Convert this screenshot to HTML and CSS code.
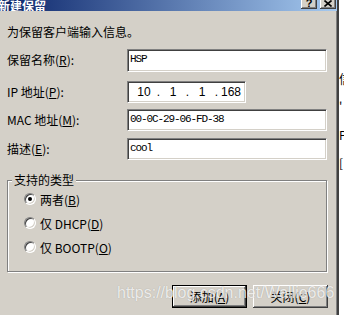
FILE: index.html
```html
<!DOCTYPE html>
<html lang="zh-CN">
<head>
  <meta charset="UTF-8">
  <title>新建保留</title>
  <link rel="stylesheet" href="styles.css">
</head>
<body>

<div class="screen">
  <div class="dialog">
    <div class="titlebar">
      <span class="title">新建保留</span>
      <span class="tbtn">?</span>
      <span class="tbtn">
        <svg width="8" height="7" viewBox="0 0 8 7"><path d="M0.5 0.5 L7.5 6.5 M7.5 0.5 L0.5 6.5" stroke="#000" stroke-width="1.6" fill="none"/></svg>
      </span>
    </div>

    <div class="content">
      <p class="intro">为保留客户端输入信息。</p>

      <div class="form">
        <label class="lbl">保留名称(<u>R</u>):</label>
        <div class="field tall">HSP</div>

        <label class="lbl">IP 地址(<u>P</u>):</label>
        <div class="field ip">
          <span class="oct">10</span><span class="dot">.</span>
          <span class="oct">1</span><span class="dot">.</span>
          <span class="oct">1</span><span class="dot">.</span>
          <span class="oct">168</span>
        </div>

        <label class="lbl">MAC 地址(<u>M</u>):</label>
        <div class="field">00-0C-29-06-FD-38</div>

        <label class="lbl">描述(<u>E</u>):</label>
        <div class="field">cool</div>
      </div>

      <fieldset class="group">
        <legend>支持的类型</legend>
        <div class="radios">
          <label class="radio"><span class="circle checked"></span><span>两者(<u>B</u>)</span></label>
          <label class="radio"><span class="circle"></span><span>仅 DHCP(<u>D</u>)</span></label>
          <label class="radio"><span class="circle"></span><span>仅 BOOTP(<u>O</u>)</span></label>
        </div>
      </fieldset>

      <div class="buttons">
        <button class="btn default">添加(<u>A</u>)</button>
        <button class="btn">关闭(<u>C</u>)</button>
      </div>
    </div>

    <div class="watermark">https://blog.csdn.net/Wallie666</div>
  </div>

  <div class="behind">
    <span>信</span>
    <span>'</span>
    <span>P</span>
    <span>[</span>
  </div>
</div>

</body>
</html>
```

FILE: styles.css
```css
body {
  margin: 0;
  background-color: #fff;
  font-family: "Noto Sans CJK SC", sans-serif;
  font-size: 12px;
  color: #000;
  overflow: hidden;
}

.screen {
  display: flex;
  height: 315px;
}

.dialog {
  position: relative;
  width: 337px;
  flex: none;
  background-color: #d4d0c8;
  border-right: 2px solid #404040;
  box-shadow: inset -1px 0 0 #808080;
}

/* title bar, top half is off screen */
.titlebar {
  display: flex;
  align-items: flex-end;
  gap: 3px;
  height: 11px;
  padding-right: 1px;
  overflow: hidden;
  background: linear-gradient(to right, #0a246a, #a6caf0);
}

.title {
  flex: 1;
  margin: 0 0 -2px -2px;
  color: #fff;
  font-weight: bold;
  font-size: 12px;
  line-height: 14px;
  white-space: nowrap;
}

.tbtn {
  display: flex;
  align-items: center;
  justify-content: center;
  width: 16px;
  height: 14px;
  margin-bottom: 2px;
  box-sizing: border-box;
  padding-top: 2px;
  background-color: #d4d0c8;
  font-family: "Liberation Sans", sans-serif;
  font-weight: bold;
  font-size: 11px;
  box-shadow: inset -1px -1px #404040, inset 1px 1px #fff, inset -2px -2px #808080;
}

.content {
  padding: 13px 10px 0 7px;
}

.intro {
  margin: 0 0 9px;
  line-height: 16px;
}

.form {
  display: grid;
  grid-template-columns: 120px 200px;
  grid-template-rows: 32px 28px 29px 22px;
}

.lbl {
  line-height: 22px;
}

.field {
  height: 22px;
  box-sizing: border-box;
  padding: 0 2px;
  background-color: #fff;
  border: 1px solid;
  border-color: #808080 #fff #fff #808080;
  box-shadow: inset 1px 1px #404040, inset -1px -1px #d4d0c8;
  font-family: "Liberation Mono", monospace;
  font-size: 11px;
  letter-spacing: -1.1px;
  line-height: 19px;
}

.field.tall {
  height: 23px;
}

.field.ip {
  display: flex;
  align-items: center;
  width: 119px;
  padding-left: 5px;
  font-family: "Liberation Sans", sans-serif;
  font-size: 12px;
  letter-spacing: 0;
}

.oct {
  width: 22px;
  text-align: center;
}

.dot {
  width: 7px;
  text-align: center;
}

.group {
  width: 320px;
  box-sizing: border-box;
  margin: 13px 0 0;
  padding: 0;
  border: 1px solid #808080;
  box-shadow: 1px 1px 0 #fff, inset 1px 1px 0 #fff;
}

.group legend {
  position: relative;
  margin-left: 4px;
  padding: 0 2px;
  line-height: 14px;
  background-color: #d4d0c8;
}

.radios {
  padding: 0 0 12px 16px;
}

.radio {
  display: flex;
  align-items: center;
  gap: 4px;
  height: 24px;
}

.circle {
  position: relative;
  width: 12px;
  height: 12px;
  box-sizing: border-box;
  border-radius: 50%;
  background-color: #fff;
  border: 1px solid;
  border-color: #808080 #fff #fff #808080;
  box-shadow: inset 1px 1px #404040, inset -1px -1px #d4d0c8;
}

.circle.checked::after {
  content: "";
  position: absolute;
  left: 3px;
  top: 3px;
  width: 4px;
  height: 4px;
  border-radius: 50%;
  background-color: #000;
}

.buttons {
  display: flex;
  justify-content: flex-end;
  gap: 6px;
  margin: 13px -1px 0 0;
}

.btn {
  width: 75px;
  height: 23px;
  box-sizing: border-box;
  padding: 0;
  border: none;
  background-color: #d4d0c8;
  font-family: "Noto Sans CJK SC", sans-serif;
  font-size: 12px;
  color: #000;
  box-shadow: inset -1px -1px #404040, inset 1px 1px #fff, inset -2px -2px #808080;
}

.btn.default {
  border: 1px solid #000;
}

.watermark {
  position: absolute;
  left: 117px;
  top: 284px;
  font-family: "Liberation Sans", sans-serif;
  font-size: 16px;
  line-height: 18px;
  white-space: nowrap;
  color: rgba(255, 255, 255, 0.8);
  text-shadow: 0 0 1px rgba(0, 0, 0, 0.25);
}

.behind {
  flex: 1;
  display: flex;
  flex-direction: column;
  gap: 14px;
  padding-top: 72px;
  overflow: hidden;
  background-color: #fff;
  line-height: 14px;
}
```
